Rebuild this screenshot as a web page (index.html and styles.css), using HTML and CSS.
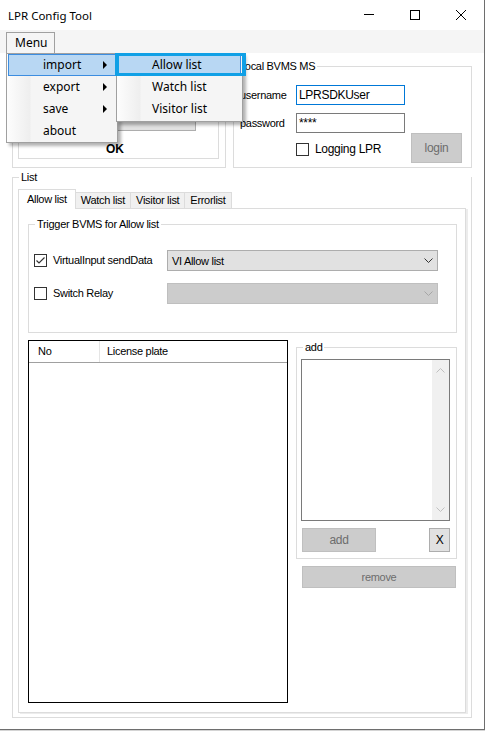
FILE: index.html
```html
<!DOCTYPE html>
<html lang="en">
<head>
    <meta charset="UTF-8">
    <meta name="viewport" content="width=device-width, initial-scale=1.0">
    <title>LPR Config Tool</title>
    <link rel="stylesheet" href="styles.css">
</head>
<body>
<div class="window">
    <div class="titlebar">
        <span class="title">LPR Config Tool</span>
        <div class="caption">
            <span class="cap-btn"><svg width="10" height="10" viewBox="0 0 10 10"><line x1="0" y1="4.5" x2="10" y2="4.5"/></svg></span>
            <span class="cap-btn"><svg width="10" height="10" viewBox="0 0 10 10"><rect x="0.5" y="0.5" width="9" height="9"/></svg></span>
            <span class="cap-btn"><svg width="10" height="10" viewBox="0 0 10 10"><line x1="0" y1="0" x2="10" y2="10"/><line x1="10" y1="0" x2="0" y2="10"/></svg></span>
        </div>
    </div>

    <div class="menubar">
        <div class="menu-item open">Menu</div>
    </div>

    <div class="client ui">
        <div class="top-row">
            <div class="group group-result">
                <div class="panel-result">
                    <div class="btn btn-hidden"></div>
                    <div class="ok-label">OK</div>
                </div>
            </div>

            <div class="group group-login">
                <div class="group-title title-login">Local BVMS MS</div>
                <div class="form-row row-first">
                    <span class="field-label">username</span>
                    <div class="textbox focused">LPRSDKUser</div>
                </div>
                <div class="form-row">
                    <span class="field-label">password</span>
                    <div class="textbox">****</div>
                </div>
                <div class="form-row row-last">
                    <label class="check check-logging"><span class="check-box"></span>Logging LPR</label>
                    <div class="btn disabled btn-login">login</div>
                </div>
            </div>
        </div>

        <div class="group group-list">
            <div class="group-title">List</div>
            <div class="tabs">
                <div class="tab selected">Allow list</div>
                <div class="tab">Watch list</div>
                <div class="tab">Visitor list</div>
                <div class="tab">Errorlist</div>
            </div>
            <div class="tab-page">
                <div class="group group-trigger">
                    <div class="group-title">Trigger BVMS for Allow list</div>
                    <div class="trigger-row row-first">
                        <label class="check check-trigger">
                            <span class="check-box"><svg width="11" height="11" viewBox="0 0 11 11"><polyline points="1.5,5.5 4,8 9.5,2.5"/></svg></span>VirtualInput sendData
                        </label>
                        <div class="combo">
                            <span>VI Allow list</span>
                            <svg width="9" height="5" viewBox="0 0 9 5"><polyline points="0.5,0.5 4.5,4.5 8.5,0.5"/></svg>
                        </div>
                    </div>
                    <div class="trigger-row">
                        <label class="check check-trigger"><span class="check-box"></span>Switch Relay</label>
                        <div class="combo disabled">
                            <span></span>
                            <svg width="9" height="5" viewBox="0 0 9 5"><polyline points="0.5,0.5 4.5,4.5 8.5,0.5"/></svg>
                        </div>
                    </div>
                </div>

                <div class="page-bottom">
                    <div class="listview">
                        <div class="lv-header">
                            <div class="lv-col col-no">No</div>
                            <div class="lv-col col-plate">License plate</div>
                        </div>
                    </div>

                    <div class="side">
                        <div class="group group-add">
                            <div class="group-title">add</div>
                            <div class="memo">
                                <div class="scrollbar">
                                    <svg width="9" height="5" viewBox="0 0 9 5"><polyline points="0.5,4.5 4.5,0.5 8.5,4.5"/></svg>
                                    <svg width="9" height="5" viewBox="0 0 9 5"><polyline points="0.5,0.5 4.5,4.5 8.5,0.5"/></svg>
                                </div>
                            </div>
                            <div class="add-buttons">
                                <div class="btn disabled btn-add">add</div>
                                <div class="btn btn-clear">X</div>
                            </div>
                        </div>
                        <div class="btn disabled btn-remove">remove</div>
                    </div>
                </div>
            </div>
        </div>
    </div>

    <!-- open menu, drawn over the form -->
    <div class="dropdown">
        <div class="dd-item hot">import<span class="arrow"></span></div>
        <div class="dd-item">export<span class="arrow"></span></div>
        <div class="dd-item">save<span class="arrow"></span></div>
        <div class="dd-item">about</div>
    </div>
    <div class="dropdown submenu">
        <div class="dd-item hot">Allow list</div>
        <div class="dd-item">Watch list</div>
        <div class="dd-item">Visitor list</div>
    </div>
    <div class="callout"></div>
</div>
</body>
</html>
```

FILE: styles.css
```css
body {
    margin: 0;
    background-color: #d4d4d4;
}
.window {
    position: relative;
    width: 485px;
    height: 730px;
    box-sizing: border-box;
    background-color: #ffffff;
    border-right: 1px solid #6e6e6e;
    border-bottom: 1px solid #6e6e6e;
    overflow: hidden;
}

/* title bar */
.titlebar {
    display: flex;
    align-items: center;
    height: 30px;
    padding-left: 8px;
}
.title {
    font-family: "Noto Sans", sans-serif;
    font-size: 11.5px;
    color: #000;
}
.caption {
    display: flex;
    margin-left: auto;
}
.cap-btn {
    display: flex;
    align-items: center;
    justify-content: center;
    width: 46px;
    height: 30px;
}
.cap-btn svg {
    fill: none;
    stroke: #000;
    stroke-width: 1;
}

/* menu strip */
.menubar {
    height: 23px;
    padding-left: 6px;
    box-sizing: border-box;
    padding-top: 2px;
    background-color: #f5f5f5;
}
.menu-item {
    font-family: "Noto Sans", sans-serif;
    font-size: 12px;
    line-height: 20px;
    height: 21px;
    width: 49px;
    box-sizing: border-box;
    padding-left: 8px;
}
.menu-item.open {
    border: 1px solid #a0a0a0;
    border-bottom: none;
    background-color: #f5f5f5;
}

/* form controls */
.ui {
    font-family: "Liberation Sans", Arial, sans-serif;
    font-size: 11px;
    letter-spacing: -0.3px;
    color: #000;
}
.client {
    padding: 13px 12px 0 12px;
}
.group {
    border: 1px solid #dcdcdc;
    box-sizing: border-box;
}
.group-title {
    display: table;
    margin: -7px 0 0 6px;
    padding: 0 2px;
    line-height: 13px;
    background-color: #ffffff;
}
.top-row {
    display: flex;
    gap: 7px;
    height: 102px;
}
.group-result {
    width: 214px;
}
.panel-result {
    margin: 13px 0 0 5px;
    width: 201px;
    height: 79px;
    box-sizing: border-box;
    border: 1px solid #dcdcdc;
}
.btn {
    box-sizing: border-box;
    border: 1px solid #adadad;
    background-color: #e1e1e1;
    text-align: center;
}
.btn.disabled {
    border-color: #bfbfbf;
    background-color: #cccccc;
    color: #6d6d6d;
}
.btn-hidden {
    margin: 26px 0 0 5px;
    width: 172px;
    height: 24px;
}
.ok-label {
    margin: 11px 0 0 87px;
    font-size: 12px;
    font-weight: bold;
    line-height: 14px;
    letter-spacing: 0;
}

.group-login {
    width: 239px;
}
.title-login {
    margin-left: 3px;
}
.form-row {
    display: flex;
    align-items: center;
    margin-top: 8px;
}
.form-row.row-first {
    margin-top: 12px;
}
.form-row.row-last {
    align-items: flex-start;
    margin-top: 0;
}
.field-label {
    width: 56px;
    margin-left: 6px;
}
.textbox {
    width: 109px;
    height: 20px;
    box-sizing: border-box;
    border: 1px solid #7a7a7a;
    padding-left: 2px;
    line-height: 18px;
    font-size: 12px;
}
.textbox.focused {
    border-color: #0078d7;
}
.check {
    display: flex;
    align-items: center;
    gap: 6px;
    line-height: 13px;
}
.check-box {
    display: flex;
    align-items: center;
    justify-content: center;
    width: 13px;
    height: 13px;
    box-sizing: border-box;
    border: 1px solid #333333;
    background-color: #ffffff;
}
.check-box svg {
    fill: none;
    stroke: #333333;
    stroke-width: 1.2;
}
.check-logging {
    margin: 10px 0 0 62px;
    font-size: 12px;
}
.btn-login {
    width: 51px;
    height: 30px;
    line-height: 28px;
    margin: 0 9px 0 auto;
    font-size: 12px;
}

/* list group */
.group-list {
    display: flex;
    flex-direction: column;
    height: 541px;
    margin-top: 9px;
}
.tabs {
    display: flex;
    align-items: flex-end;
    height: 19px;
    margin: 5px 0 0 5px;
}
.tab {
    height: 16px;
    box-sizing: border-box;
    padding: 0 5px;
    margin-right: -1px;
    border: 1px solid #dcdcdc;
    border-bottom: none;
    background-color: #f0f0f0;
    line-height: 15px;
}
.tab.selected {
    position: relative;
    z-index: 1;
    height: 20px;
    margin-bottom: -1px;
    padding: 0 8px;
    background-color: #ffffff;
    line-height: 19px;
}
.tab-page {
    flex: 1;
    margin: 0 5px 4px 5px;
    border: 1px solid #dcdcdc;
    box-shadow: 2px 1px 0 #ececec;
}
.group-trigger {
    width: 429px;
    height: 109px;
    margin: 15px 0 0 9px;
}
.trigger-row {
    display: flex;
    align-items: center;
    height: 21px;
    margin-top: 12px;
}
.trigger-row.row-first {
    margin-top: 19px;
}
.check-trigger {
    width: 133px;
    margin-left: 5px;
}
.combo {
    display: flex;
    align-items: center;
    justify-content: space-between;
    width: 271px;
    height: 21px;
    box-sizing: border-box;
    padding: 0 4px;
    border: 1px solid #adadad;
    background-color: #e1e1e1;
}
.combo svg {
    fill: none;
    stroke: #333333;
    stroke-width: 1;
}
.combo.disabled {
    border-color: #bfbfbf;
    background-color: #cccccc;
}
.combo.disabled svg {
    stroke: #a6a6a6;
}

.page-bottom {
    display: flex;
    margin: 7px 0 0 9px;
}
.listview {
    width: 260px;
    height: 363px;
    box-sizing: border-box;
    border: 1px solid #000000;
}
.lv-header {
    display: flex;
    height: 22px;
    box-sizing: border-box;
    border-bottom: 1px solid #a0a0a0;
    line-height: 21px;
}
.lv-col {
    box-sizing: border-box;
}
.col-no {
    width: 71px;
    padding-left: 9px;
    border-right: 1px solid #e5e5e5;
}
.col-plate {
    padding-left: 7px;
}

.side {
    width: 161px;
    margin-left: 8px;
}
.group-add {
    height: 212px;
    margin-top: 7px;
}
.memo {
    display: flex;
    justify-content: flex-end;
    width: 149px;
    height: 162px;
    box-sizing: border-box;
    margin: 5px 0 0 4px;
    border: 1px solid #7a7a7a;
}
.scrollbar {
    display: flex;
    flex-direction: column;
    align-items: center;
    justify-content: space-between;
    width: 17px;
    padding: 8px 0;
    box-sizing: border-box;
    background-color: #f0f0f0;
}
.scrollbar svg {
    fill: none;
    stroke: #c0c0c0;
    stroke-width: 1;
}
.add-buttons {
    display: flex;
    margin-top: 7px;
}
.btn-add {
    width: 74px;
    height: 24px;
    line-height: 22px;
    margin-left: 5px;
    font-size: 12px;
}
.btn-clear {
    width: 21px;
    height: 24px;
    line-height: 22px;
    margin: 0 6px 0 auto;
    font-size: 12px;
}
.btn-remove {
    width: 154px;
    height: 22px;
    line-height: 20px;
    margin: 7px 0 0 6px;
}

/* open menus */
.dropdown {
    position: absolute;
    left: 6px;
    top: 53px;
    width: 112px;
    box-sizing: border-box;
    padding: 0 1px;
    border: 1px solid #a0a0a0;
    background: linear-gradient(to right, #fdfdfd 0, #eeeeee 23px, #f5f5f5 24px) no-repeat;
    background-color: #f5f5f5;
    box-shadow: 3px 3px 3px rgba(0, 0, 0, 0.3);
    font-family: "Noto Sans", sans-serif;
    font-size: 12px;
    color: #000;
}
.dd-item {
    position: relative;
    height: 22px;
    box-sizing: border-box;
    padding-left: 34px;
    line-height: 20px;
    border: 1px solid transparent;
}
.dd-item.hot {
    border-color: #3c8de0;
    background-color: #b8d7f3;
}
.arrow {
    position: absolute;
    right: 8px;
    top: 6px;
    border-left: 4px solid #000;
    border-top: 4px solid transparent;
    border-bottom: 4px solid transparent;
}
.submenu {
    left: 116px;
    width: 127px;
    padding-bottom: 1px;
}
.submenu .dd-item {
    padding-left: 33px;
}
.callout {
    position: absolute;
    left: 115px;
    top: 53px;
    width: 131px;
    height: 23px;
    box-sizing: border-box;
    border-style: solid;
    border-width: 3px 4px;
    border-color: #10a0e6;
}
```
